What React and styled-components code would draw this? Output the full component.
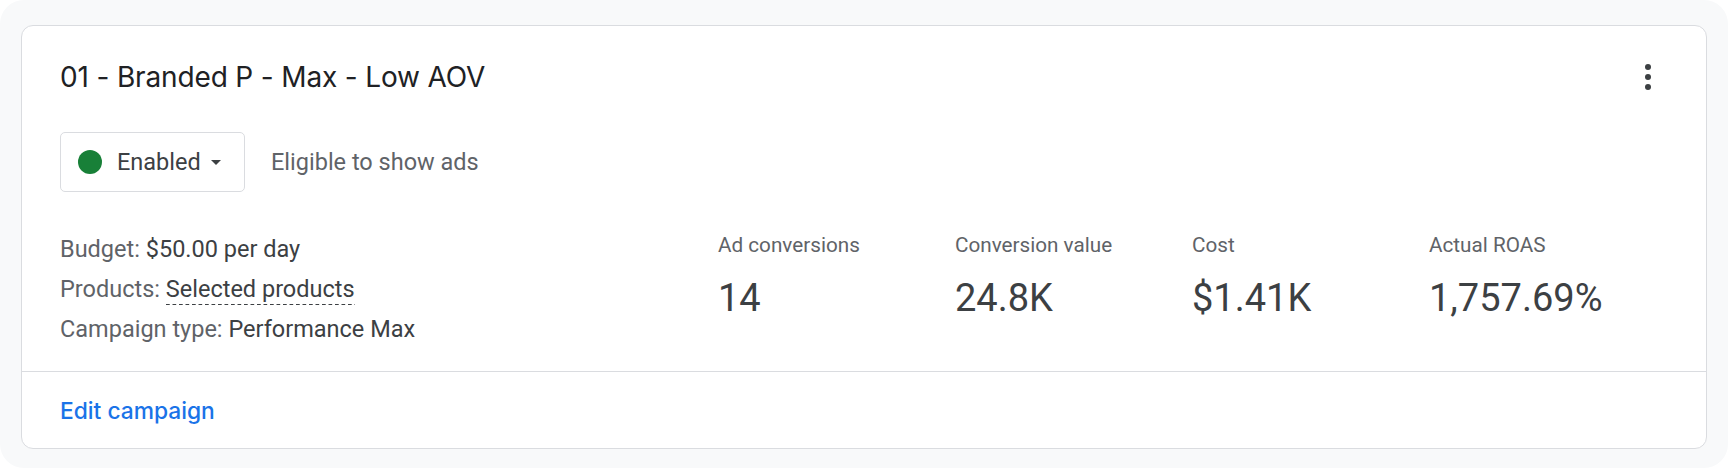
import React from 'react';
import styled, { createGlobalStyle } from 'styled-components';

const GlobalStyle = createGlobalStyle`
  html, body {
    margin: 0;
    padding: 0;
    background: #ffffff;
  }
  body {
    font-family: Roboto, "Liberation Sans", Arial, sans-serif;
    -webkit-font-smoothing: antialiased;
  }
`;

const metrics = [
  { label: 'Ad conversions', value: '14' },
  { label: 'Conversion value', value: '24.8K' },
  { label: 'Cost', value: '$1.41K' },
  { label: 'Actual ROAS', value: '1,757.69%' },
];

const App = () => {
  return (
    <>
      <GlobalStyle />
      <Page>
        <Card>
          <Top>
            <Header>
              <Title>01 - Branded P - Max - Low AOV</Title>
              <MoreButton aria-label="More options">
                <Dot />
                <Dot />
                <Dot />
              </MoreButton>
            </Header>

            <StatusRow>
              <StatusButton>
                <StatusDot />
                <span>Enabled</span>
                <Caret />
              </StatusButton>
              <StatusText>Eligible to show ads</StatusText>
            </StatusRow>

            <Body>
              <Details>
                <DetailRow>
                  Budget: <Value>$50.00 per day</Value>
                </DetailRow>
                <DetailRow>
                  Products: <DashedValue>Selected products</DashedValue>
                </DetailRow>
                <DetailRow>
                  Campaign type: <Value>Performance Max</Value>
                </DetailRow>
              </Details>

              <Metrics>
                {metrics.map((m) => (
                  <Metric key={m.label}>
                    <MetricLabel>{m.label}</MetricLabel>
                    <MetricValue>{m.value}</MetricValue>
                  </Metric>
                ))}
              </Metrics>
            </Body>
          </Top>

          <Footer>
            <EditLink href="#">Edit campaign</EditLink>
          </Footer>
        </Card>
      </Page>
    </>
  );
};

// Styled components
const Page = styled.div`
  box-sizing: border-box;
  width: 1728px;
  height: 468px;
  padding: 25px 21px 19px;
  background: #f8f9fa;
  border-radius: 24px;
`;

const Card = styled.div`
  box-sizing: border-box;
  height: 424px;
  display: flex;
  flex-direction: column;
  background: #ffffff;
  border: 1px solid #dadce0;
  border-radius: 12px;
`;

const Top = styled.div`
  box-sizing: border-box;
  height: 346px;
  padding: 33px 40px 0 38px;
  border-bottom: 1px solid #dadce0;
`;

const Header = styled.div`
  display: flex;
  align-items: center;
  justify-content: space-between;
  height: 36px;
`;

const Title = styled.h1`
  margin: 0;
  font-family: Inter, "Open Sans", sans-serif;
  font-weight: 400;
  font-size: 28px;
  line-height: 36px;
  color: #202124;
  letter-spacing: -0.15px;
`;

const MoreButton = styled.button`
  width: 36px;
  height: 36px;
  padding: 0;
  border: none;
  background: transparent;
  display: flex;
  flex-direction: column;
  align-items: center;
  justify-content: center;
  gap: 4px;
  cursor: pointer;
`;

const Dot = styled.span`
  width: 6px;
  height: 6px;
  border-radius: 50%;
  background: #3c4043;
`;

const StatusRow = styled.div`
  display: flex;
  align-items: center;
  gap: 26px;
  margin-top: 37px;
`;

const StatusButton = styled.button`
  box-sizing: border-box;
  height: 60px;
  width: 185px;
  display: flex;
  align-items: center;
  padding: 0 0 0 17px;
  border: 1px solid #dadce0;
  border-radius: 5px;
  background: #ffffff;
  font-family: Roboto, sans-serif;
  font-size: 23.5px;
  color: #3c4043;
  cursor: pointer;
`;

const StatusDot = styled.span`
  width: 24px;
  height: 24px;
  border-radius: 50%;
  background: #188038;
  margin-right: 15px;
`;

const Caret = styled.span`
  width: 0;
  height: 0;
  margin-left: 10px;
  border-left: 5.5px solid transparent;
  border-right: 5.5px solid transparent;
  border-top: 5.5px solid #3c4043;
`;

const StatusText = styled.span`
  font-size: 23.5px;
  color: #5f6368;
`;

const Body = styled.div`
  display: flex;
  margin-top: 37px;
`;

const Details = styled.div`
  width: 661px;
  display: flex;
  flex-direction: column;
`;

const DetailRow = styled.div`
  font-size: 23.5px;
  line-height: 40px;
  color: #5f6368;
`;

const Value = styled.span`
  color: #3c4043;
`;

const DashedValue = styled.span`
  color: #3c4043;
  padding-bottom: 2px;
  background-image: linear-gradient(to right, #3c4043 60%, transparent 60%);
  background-size: 6.5px 1.5px;
  background-repeat: repeat-x;
  background-position: 0 100%;
`;

const Metrics = styled.div`
  display: grid;
  grid-template-columns: repeat(4, 237px);
  padding-top: 4px;
`;

const Metric = styled.div`
  display: flex;
  flex-direction: column;
  gap: 17px;
`;

const MetricLabel = styled.div`
  font-size: 20.7px;
  line-height: 24px;
  color: #5f6368;
`;

const MetricValue = styled.div`
  font-size: 38px;
  line-height: 48px;
  color: #3c4043;
`;

const Footer = styled.div`
  flex: 1;
  display: flex;
  align-items: center;
  padding: 0 38px;
`;

const EditLink = styled.a`
  font-family: Inter, Roboto, sans-serif;
  font-weight: 500;
  font-size: 22.8px;
  color: #1a73e8;
  text-decoration: none;
`;

export default App;
